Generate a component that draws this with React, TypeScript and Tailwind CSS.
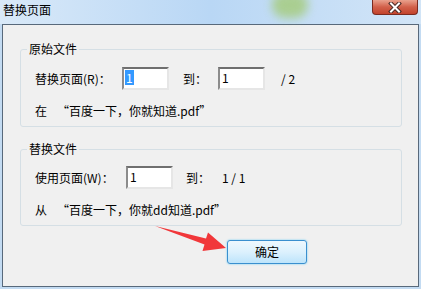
import React from 'react';

function Field({ value, selected }: { value: string; selected?: boolean }) {
  return (
    <div className="w-[47px] h-[23px] border-2 border-t-[#6f6f6f] border-l-[#8c8c8c] border-b-[#e6e6e6] border-r-[#e6e6e6] bg-white pl-[1px] pt-[1px]">
      {selected ? (
        <span className="inline-block bg-[#3399ff] text-white leading-[15px] px-[1px]">{value}</span>
      ) : (
        <span className="inline-block leading-[15px] px-[1px]">{value}</span>
      )}
    </div>
  );
}

export default function App() {
  return (
    <div className="relative w-[421px] h-[289px] overflow-hidden bg-[#c3dbf2] font-['Noto_Sans_CJK_SC',sans-serif] text-[12px] leading-[16px] text-black">
      {/* title bar */}
      <div className="relative h-[24px] flex items-start bg-gradient-to-r from-[#d9e9f8] via-[#b9d7f5] to-[#d2e5f7]">
        <div className="absolute left-[272px] top-[-8px] w-[36px] h-[26px] rounded-full bg-[#a4cb78] blur-[5px] opacity-80" />
        <span className="relative ml-[3px] mt-[2px]">替换页面</span>
        <div className="relative ml-auto mr-[3px] w-[46px] h-[15px] rounded-b-[4px] border border-t-0 border-[#7a2b20] bg-gradient-to-b from-[#e9a18d] via-[#d2604a] to-[#c2432c] flex items-center justify-center">
          <svg width="14" height="11" viewBox="0 0 14 11">
            <path d="M3 1.5 L11 9.5 M11 1.5 L3 9.5" stroke="#4a2a26" strokeWidth="4" strokeLinecap="square" />
            <path d="M3 1.5 L11 9.5 M11 1.5 L3 9.5" stroke="#ffffff" strokeWidth="2" strokeLinecap="square" />
          </svg>
        </div>
      </div>

      {/* client area */}
      <div className="ml-[2px] w-[417px] h-[263px] border border-[#58697b] bg-[#f0f0f0] flex flex-col">
        <fieldset className="ml-[17px] mt-[16px] w-[382px] border border-[#d5dfe5] rounded-[3px] pl-[14px] pb-[7px]">
          <legend className="ml-[-8px] px-[2px] leading-[16px]">原始文件</legend>
          <div className="mt-[10px] h-[23px] flex items-center">
            <span className="w-[87px]">替换页面(R)：</span>
            <Field value="1" selected />
            <span className="ml-[14px] w-[35px]">到：</span>
            <Field value="1" />
            <span className="ml-[16px]">/ 2</span>
          </div>
          <div className="mt-[13px] flex">
            <span>在</span>
            <span className="ml-[10px]">“百度一下，你就知道.pdf”</span>
          </div>
        </fieldset>

        <fieldset className="ml-[17px] mt-[14px] w-[382px] border border-[#d5dfe5] rounded-[3px] pl-[14px] pb-[7px]">
          <legend className="ml-[-8px] px-[2px] leading-[16px]">替换文件</legend>
          <div className="mt-[9px] h-[23px] flex items-center">
            <span className="w-[91px]">使用页面(W)：</span>
            <Field value="1" />
            <span className="ml-[13px] w-[36px]">到：</span>
            <span>1 / 1</span>
          </div>
          <div className="mt-[13px] flex">
            <span>从</span>
            <span className="ml-[10px]">“百度一下，你就dd知道.pdf”</span>
          </div>
        </fieldset>

        <button className="ml-[224px] mt-[14px] w-[80px] h-[24px] rounded-[3px] border border-[#3a8fcf] bg-gradient-to-b from-[#eef8fe] via-[#dcf1fd] to-[#bde4fb] shadow-[0_0_2px_#5cc8f5] flex items-center justify-center">
          确定
        </button>
      </div>

      {/* red annotation arrow */}
      <svg className="absolute left-0 top-0 pointer-events-none" width="421" height="289" viewBox="0 0 421 289">
        <polygon points="155,226 206,238.5 208,232.5 226,248 202.5,251 204.5,244.5" fill="#f1373a" />
      </svg>
    </div>
  );
}
